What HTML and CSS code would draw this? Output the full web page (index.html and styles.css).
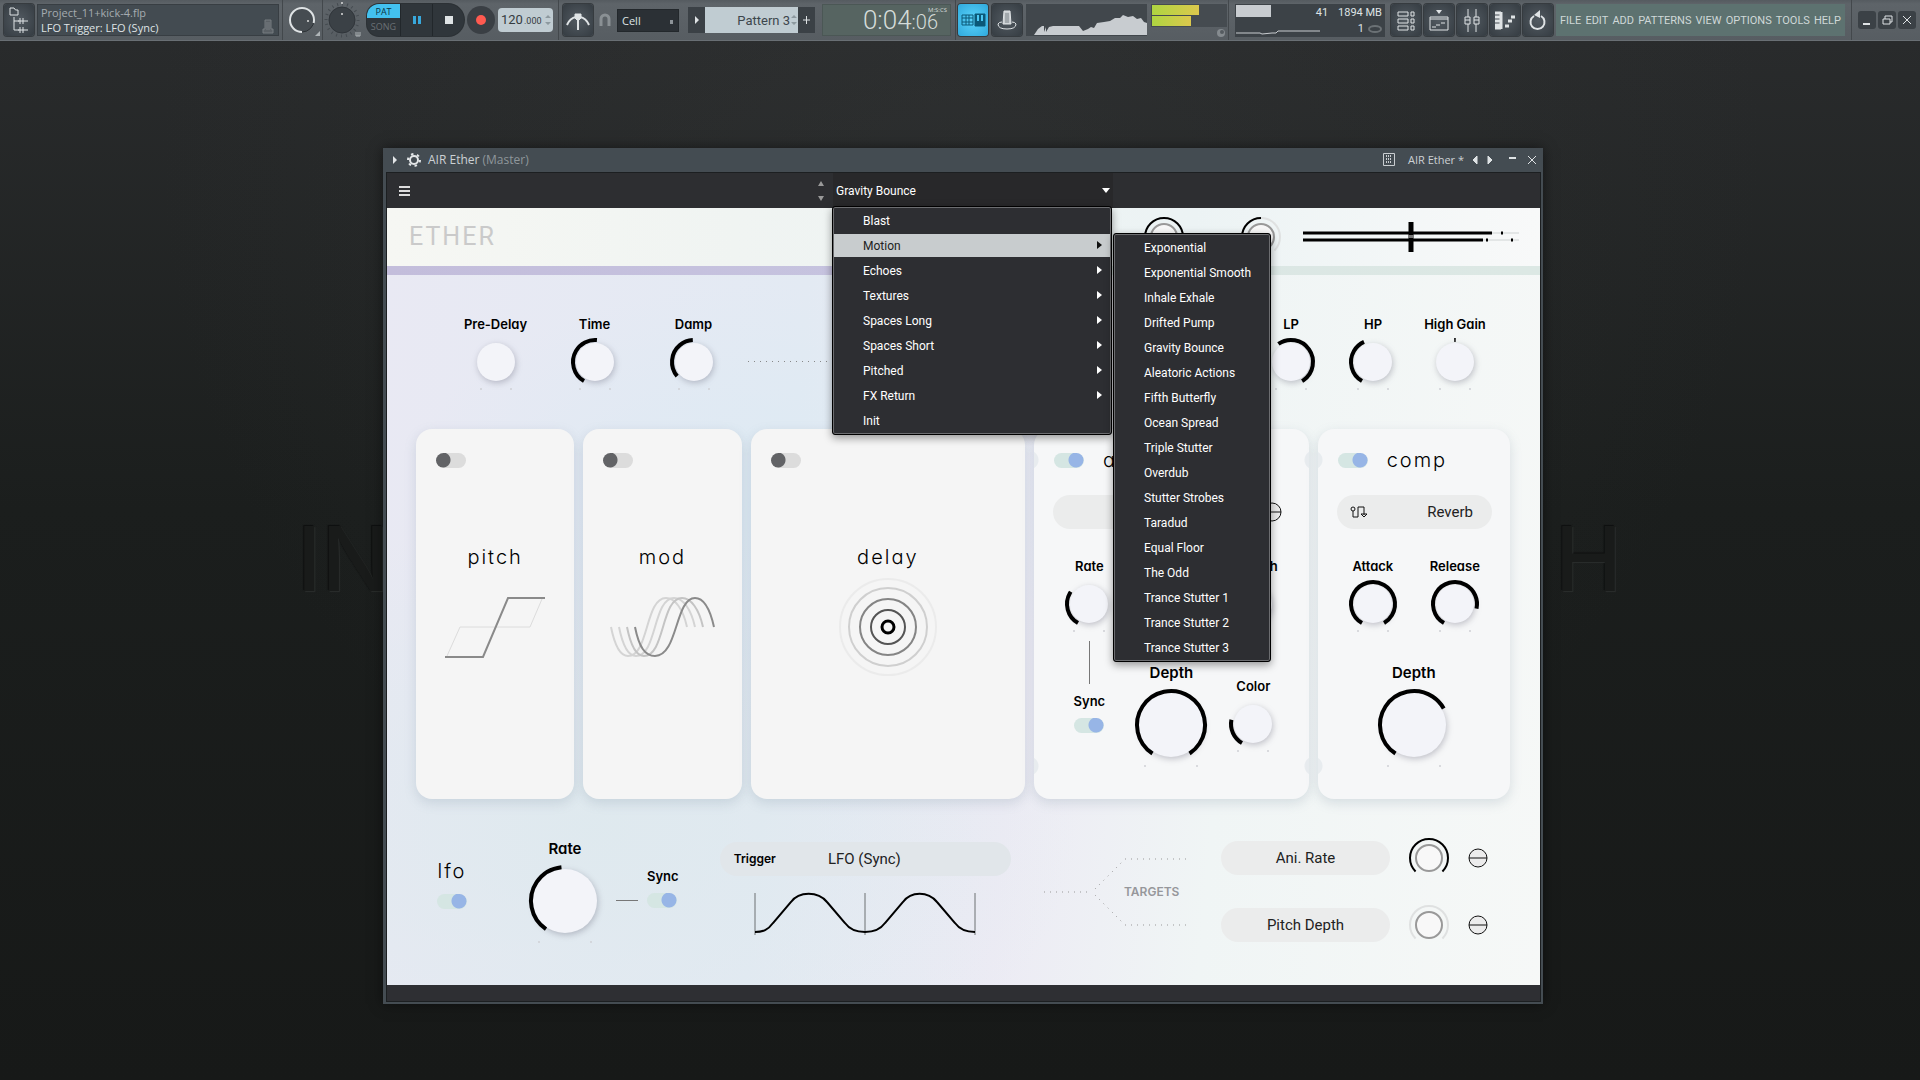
FILE: index.html
```html
<!DOCTYPE html>
<html lang="en">

<head>
  <title>AIR Ether</title>
  <meta charset="utf-8" />
  <meta name="viewport" content="width=device-width, initial-scale=1" />
  <link rel="stylesheet" href="styles.css">
</head>

<body>
  <header class="toolbar">
    <button class="tool" aria-label="Browser">
      <svg viewBox="0 0 30 32" width="30" height="32">
        <path d="M6 4h4l1.500 2H14v5H6z M10 13v13h5 M10 17h5 M16 14v6 M19 14v6 M14 17h10 M16 23v6 M19 23v6 M14 26h10" />
      </svg>
    </button>
    <div class="hint">
      <div>
        <p class="hint-file">Project_11+kick-4.flp</p>
        <p>LFO Trigger: LFO (Sync)</p>
      </div>
      <svg viewBox="0 0 14 16" width="14" height="16"><path d="M4 1h6v9h2v4H2v-4h2z M6 3v8 M8 3v8" stroke="#767c80" fill="#5b6166" /></svg>
    </div>
    <div class="cell">
      <svg viewBox="-19 -19 38 38" width="38" height="38">
        <circle r="12" fill="#464c51" stroke="#2d3236" />
        <circle class="ring" r="12" pathLength="360" stroke-dasharray="285 360" transform="rotate(90)" />
        <circle cx="6" cy="1" r="1" fill="#ddd" />
        <path d="M18 11v5h-5z" fill="#aeb4b7" />
      </svg>
    </div>
    <div class="cell">
      <svg viewBox="-19 -19 38 38" width="38" height="38">
        <circle r="16" fill="none" stroke="#454b50" stroke-dasharray="1 4" stroke-width="3" />
        <circle r="13" fill="#3b4146" stroke="#30353a" />
        <circle cy="-6" r="1" fill="#ddd" />
        <circle cy="-17" r="1" fill="#ddd" />
        <path d="M14 12v4h4v-4M16 12v4" stroke="#aeb4b7" fill="none" />
      </svg>
    </div>
    <div class="transport">
      <div class="mode">
        <button class="mode-on">PAT</button>
        <button>SONG</button>
      </div>
      <button class="play" aria-label="Pause"><i></i><i></i></button>
      <button class="stop" aria-label="Stop"><i></i></button>
    </div>
    <button class="record" aria-label="Record"><i></i></button>
    <label class="tempo"><input type="text" value="120" aria-label="Tempo"><small>.000</small>
      <svg class="spin" viewBox="0 0 6 12" width="6" height="12"><path d="M0 4l3-3 3 3zM0 8l3 3 3-3z" /></svg>
    </label>
    <div class="cell metro">
      <button class="tool" aria-label="Metronome">
        <svg viewBox="0 0 30 32" width="30" height="32">
          <path d="M4 21q3-7 9-8M26 21q-3-7-9-8M15 14v12" stroke-width="2" /><path d="M12 10h6v4l-3 3-3-3z" fill="#dfe3e5" />
        </svg>
      </button>
      <svg viewBox="0 0 14 14" width="14" height="14"><path d="M3 13V6a4 4 0 0 1 8 0v7" fill="none" stroke="#8a9094" stroke-width="3" /></svg>
      <select class="snap" aria-label="Snap"><option>Cell</option></select>
      <div class="pattern">
        <button aria-label="Pattern menu"><svg viewBox="0 0 17 26" width="17" height="26"><path d="M7 9l4 4-4 4z" fill="#dfe3e5" /></svg></button>
        <input type="text" value="Pattern 3" aria-label="Pattern">
        <svg class="spin" viewBox="0 0 6 12" width="6" height="12"><path d="M0 4l3-3 3 3zM0 8l3 3 3-3z" /></svg>
        <button aria-label="Add pattern"><svg viewBox="0 0 17 26" width="17" height="26"><path d="M5 13h7M8.500 9v8" stroke="#dfe3e5" /></svg></button>
      </div>
    </div>
    <div class="clock">
      <span>0:04<small>:06</small></span>
      <sup>M:S:CS</sup>
    </div>
    <div class="cell views">
      <button class="tool tool-on" aria-label="Typing keyboard">
        <svg viewBox="0 0 30 32" width="30" height="32"><path d="M4 11h11v10H4zM4 14h11M4 18h11M8 11v10M11 11v10" stroke="#0b5878" /><path d="M17 10h10v12H17z" fill="#0b5878" stroke="#0b5878" /><path d="M20 11v6M24 11v6" stroke="#4cc8f4" stroke-width="2" /></svg>
      </button>
      <button class="tool" aria-label="Performance">
        <svg viewBox="0 0 30 32" width="30" height="32"><path d="M12 7h6l1 13h-8z" fill="#c9cdd0" /><path d="M6 20q0 5 9 5t9-5q-1-2-4-2M6 20q1-2 4-2" /><path d="M14 9v10M16 9v10" stroke="#7b8287" /></svg>
      </button>
      <svg class="scope" viewBox="0 0 121 32" width="121" height="32">
        <path d="M8 31l4-6 4-3h2v6l2-5v5l3-5 4-1h20l6 0 4 5 5-2 3-2 3 1 3-5 7-1 6-1 5-3 5 0 3-3 5 2 5-1 4 3 4-1 3 4 3 1v12z" fill="#c8ccd0" />
      </svg>
      <div class="peak">
        <div><i class="peak-l"></i><i class="peak-r"></i></div>
        <svg viewBox="0 0 12 8" width="12" height="8"><circle cx="6" cy="4" r="4" fill="#858b8f" /><circle cx="7" cy="3" r="2" fill="#555b60" /></svg>
      </div>
    </div>
    <div class="cell">
      <div class="cpu">
        <div class="cpu-load">
          <i></i>
          <svg viewBox="0 0 84 12" width="84" height="12"><path d="M0 9h24l2 1 10-1h4l2-2h42" fill="none" stroke="#c8ccd0" /></svg>
        </div>
        <span class="cpu-pct">41</span>
        <div class="cpu-mem">
          <span>1894 MB</span>
          <span>1 <svg viewBox="0 0 14 8" width="14" height="8"><ellipse cx="7" cy="4" rx="6" ry="3" fill="none" stroke="#6b7175" stroke-width="2" /></svg></span>
        </div>
      </div>
    </div>
    <nav class="windows">
      <button class="tool" aria-label="Playlist"><svg viewBox="0 0 30 32" width="30" height="32"><path d="M7 8h10v4H7zM20 8h3v4h-3zM7 15h10v4H7zM20 15h3v4h-3zM7 22h10v4H7zM20 22h3v4h-3z" /></svg></button>
      <button class="tool" aria-label="Piano roll"><svg viewBox="0 0 30 32" width="30" height="32"><path d="M6 13h18v13H6zM6 15h18M8 23h4M12 21h4M17 19h4" /><path d="M12 6h6l-3 4z" fill="#dfe3e5" stroke="none" /></svg></button>
      <button class="tool" aria-label="Mixer"><svg viewBox="0 0 30 32" width="30" height="32"><path d="M11 5v8M11 20v8M19 5v8M19 20v8M8 13h5v7H8zM17 13h5v7h-5zM8 16h5M17 16h5" /></svg></button>
      <button class="tool" aria-label="Channel rack"><svg viewBox="0 0 30 32" width="30" height="32"><path d="M5 9h6M5 13h5M5 17h6M5 21h5M5 24h6M11 8v17M15 22h4M18 17h4M21 13h4" stroke-width="3" /></svg></button>
      <button class="tool" aria-label="Undo"><svg viewBox="0 0 30 32" width="30" height="32"><path d="M11 12a7 7 0 1 0 7 0" stroke-width="2" /><path d="M11 11l6-5v8z" fill="#dfe3e5" stroke="none" /></svg></button>
    </nav>
    <nav class="menus">
      <a href="#">FILE</a><a href="#">EDIT</a><a href="#">ADD</a><a href="#">PATTERNS</a><a href="#">VIEW</a><a href="#">OPTIONS</a><a href="#">TOOLS</a><a href="#">HELP</a>
    </nav>
    <div class="cell app-buttons">
      <button aria-label="Minimize"><svg viewBox="0 0 18 18" width="18" height="18"><path d="M5 13h7" stroke-width="2" /></svg></button>
      <button aria-label="Restore"><svg viewBox="0 0 18 18" width="18" height="18"><path d="M5 8h7v5H5zM7 8V5h7v6h-2" /></svg></button>
      <button aria-label="Close"><svg viewBox="0 0 18 18" width="18" height="18"><path d="M5 5l8 8M13 5l-8 8" /></svg></button>
    </div>
  </header>

  <main class="desktop">
    <div class="wallpaper" aria-hidden="true"><span>IN</span><span>H</span></div>

    <section class="window">
      <div class="titlebar">
        <svg viewBox="0 0 30 14" width="30" height="14">
          <path d="M1 3l4 4-4 4z" fill="#e3e6e8" />
          <circle cx="22" cy="7" r="4" fill="none" stroke="#e3e6e8" stroke-width="2" />
          <circle cx="22" cy="7" r="6" fill="none" stroke="#e3e6e8" stroke-width="2" pathLength="60" stroke-dasharray="4 6" />
        </svg>
        <h1>AIR Ether <span>(Master)</span></h1>
        <svg class="titlebar-grid" viewBox="0 0 12 13" width="12" height="13"><path d="M.5.5h11v12H.5z" fill="none" stroke="#c9cdd0" /><path d="M3 3h6M3 6h6M3 9h6" stroke="#c9cdd0" stroke-width="2" stroke-dasharray="1 1" /></svg>
        <span class="titlebar-preset">AIR Ether *</span>
        <button aria-label="Previous"><svg viewBox="0 0 6 10" width="6" height="10"><path d="M5 1v8L1 5z" fill="#dfe3e5" /></svg></button>
        <button aria-label="Next"><svg viewBox="0 0 6 10" width="6" height="10"><path d="M1 1v8l4-4z" fill="#dfe3e5" /></svg></button>
        <button class="titlebar-min" aria-label="Minimize"><svg viewBox="0 0 8 10" width="8" height="10"><path d="M0 3h7" stroke-width="2" /></svg></button>
        <button aria-label="Close"><svg viewBox="0 0 10 10" width="10" height="10"><path d="M1 1l8 8M9 1l-8 8" /></svg></button>
      </div>

      <div class="plugin">
        <div class="presetbar">
          <button class="burger" aria-label="Menu"><i></i><i></i><i></i></button>
          <div class="stepper">
            <button aria-label="Up"><svg viewBox="0 0 6 5" width="6" height="5"><path d="M0 5l3-5 3 5z" /></svg></button>
            <button aria-label="Down"><svg viewBox="0 0 6 5" width="6" height="5"><path d="M0 0l3 5 3-5z" /></svg></button>
          </div>
          <div class="preset">
            <button class="preset-name" aria-haspopup="menu">Gravity Bounce <i></i></button>
            <ul class="menu">
              <li><button>Blast</button></li>
              <li class="has-sub open"><button>Motion</button>
                <ul class="menu submenu">
                  <li><button>Exponential</button></li>
                  <li><button>Exponential Smooth</button></li>
                  <li><button>Inhale Exhale</button></li>
                  <li><button>Drifted Pump</button></li>
                  <li><button>Gravity Bounce</button></li>
                  <li><button>Aleatoric Actions</button></li>
                  <li><button>Fifth Butterfly</button></li>
                  <li><button>Ocean Spread</button></li>
                  <li><button>Triple Stutter</button></li>
                  <li><button>Overdub</button></li>
                  <li><button>Stutter Strobes</button></li>
                  <li><button>Taradud</button></li>
                  <li><button>Equal Floor</button></li>
                  <li><button>The Odd</button></li>
                  <li><button>Trance Stutter 1</button></li>
                  <li><button>Trance Stutter 2</button></li>
                  <li><button>Trance Stutter 3</button></li>
                </ul>
              </li>
              <li class="has-sub"><button>Echoes</button></li>
              <li class="has-sub"><button>Textures</button></li>
              <li class="has-sub"><button>Spaces Long</button></li>
              <li class="has-sub"><button>Spaces Short</button></li>
              <li class="has-sub"><button>Pitched</button></li>
              <li class="has-sub"><button>FX Return</button></li>
              <li><button>Init</button></li>
            </ul>
          </div>
        </div>

        <div class="ether">
          <div class="brand">
            <h2>ETHER</h2>
            <svg class="brand-ring" viewBox="-22 -22 44 44" width="44" height="44">
              <circle r="13" class="ring-inner" /><circle r="19" class="ring-arc" pathLength="360" stroke-dasharray="270 360" transform="rotate(135)" />
            </svg>
            <svg class="brand-ring" viewBox="-22 -22 44 44" width="44" height="44">
              <circle r="13" class="ring-inner" /><circle r="19" class="ring-track" pathLength="360" stroke-dasharray="270 360" transform="rotate(135)" /><circle r="19" class="ring-arc" pathLength="360" stroke-dasharray="135 360" transform="rotate(135)" />
            </svg>
            <svg class="balance" viewBox="0 0 216 30" width="216" height="30">
              <path d="M189 11h27M180 18h36" stroke="#e3e6e6" stroke-width="2" />
              <path d="M0 11h189M0 18h180M198 11h2M183 18h2M208 18h2" stroke="#000" stroke-width="3" />
              <path d="M108 0v30" stroke="#000" stroke-width="5" />
              <path d="M106 13h4v3h-4z" fill="#777" />
            </svg>
          </div>

          <div class="main-controls">
            <div class="knobs knobs-wide">
              <label class="control">Pre-Delay<span class="knob"></span></label>
              <label class="control">Time<span class="knob" data-from="0" data-to="155"></span></label>
              <label class="control">Damp<span class="knob" data-from="20" data-to="147"></span></label>
            </div>
            <div class="dots"></div>
            <div class="knobs">
              <label class="control">LP<span class="knob" data-from="115" data-to="300"></span></label>
              <label class="control">HP<span class="knob" data-from="0" data-to="126"></span></label>
              <label class="control">High Gain<span class="knob" data-from="148" data-to="152"></span></label>
            </div>
          </div>

          <div class="cards">
            <article class="card">
              <header><input type="checkbox" class="toggle" aria-label="pitch on"></header>
              <h3>pitch</h3>
              <svg viewBox="0 0 110 100" width="110" height="100" fill="none">
                <path d="M7 79L20 50H90L102 22" stroke="#dcdcdc" />
                <path d="M5 80H43L68 21H105" stroke="#8a8a8a" stroke-width="2" />
              </svg>
            </article>
            <article class="card">
              <header><input type="checkbox" class="toggle" aria-label="mod on"></header>
              <h3>mod</h3>
              <svg viewBox="0 0 110 100" width="110" height="100" fill="none" stroke-width="2">
                <g stroke="#d4d4d4"><path d="M4 50C8 70 14 79 21 79C42 79 38 21 59 21C68 21 76 32 80 50" /><path d="M12 50C16 70 22 79 29 79C50 79 46 21 67 21C76 21 84 32 88 50" /><path d="M20 50C24 70 30 79 37 79C58 79 54 21 75 21C84 21 92 32 96 50" stroke="#c4c4c4" /></g>
                <path d="M28 50C32 70 38 79 48 79C71 79 68 21 88 21C97 21 103 32 107 50" stroke="#8a8a8a" />
              </svg>
            </article>
            <article class="card">
              <header><input type="checkbox" class="toggle" aria-label="delay on"></header>
              <h3>delay</h3>
              <svg viewBox="-50 -50 100 100" width="100" height="100" fill="none" stroke-width="2">
                <circle r="48" stroke="#ebebeb" /><circle r="39" stroke="#cfcfcf" /><circle r="28" stroke="#858585" /><circle r="17" stroke="#555" /><circle r="6" stroke="#000" stroke-width="3" />
              </svg>
            </article>
            <article class="card notch notch-both">
              <header><input type="checkbox" class="toggle" aria-label="animate on" checked><h3>animate</h3></header>
              <div class="source">
                <select class="pill" aria-label="Animate source"><option> </option></select>
                <svg class="minus" viewBox="-10 -10 20 20" width="20" height="20"><circle r="9" /><path d="M-9 0H9" /></svg>
              </div>
              <div class="knob-grid">
                <label class="control">Rate<span class="knob" data-from="0" data-to="94"></span></label>
                <span></span>
                <label class="control">Smooth<span class="knob"></span></label>
                <div class="sync">
                  <i class="vline"></i>
                  <label>Sync<input type="checkbox" class="toggle" checked></label>
                </div>
                <label class="control control-big">Depth<span class="knob" data-size="big" data-from="3" data-to="297"></span></label>
                <label class="control control-low">Color<span class="knob" data-from="0" data-to="71"></span></label>
              </div>
            </article>
            <article class="card notch">
              <header><input type="checkbox" class="toggle" aria-label="comp on" checked><h3>comp</h3></header>
              <div class="source">
                <svg class="route" viewBox="0 0 18 14" width="18" height="14"><circle cx="3" cy="4" r="2" /><path d="M3 6v6h5V2h6v8M11 9h6l-3 3z" /></svg>
                <select class="pill pill-right" aria-label="Compressor routing"><option>Reverb</option></select>
              </div>
              <div class="knob-grid knob-grid-two">
                <label class="control">Attack<span class="knob" data-from="0" data-to="300"></span></label>
                <label class="control">Release<span class="knob" data-from="0" data-to="252"></span></label>
                <label class="control control-big control-span">Depth<span class="knob" data-size="big" data-from="3" data-to="211"></span></label>
              </div>
            </article>
          </div>

          <div class="lfo">
            <div class="lfo-name"><h3>lfo</h3><input type="checkbox" class="toggle" aria-label="lfo on" checked></div>
            <label class="control control-lfo">Rate<span class="knob" data-size="big" data-from="4" data-to="144"></span></label>
            <i class="hline"></i>
            <label class="lfo-sync">Sync<input type="checkbox" class="toggle" checked></label>
            <div class="trigger">
              <div class="pill pill-trigger">
                <label for="trigger">Trigger</label>
                <select id="trigger"><option>LFO (Sync)</option></select>
              </div>
              <svg viewBox="0 0 222 44" width="222" height="44" fill="none">
                <path d="M1 1v42M111 1v42M221 1v42" stroke="#6d7072" />
                <path d="M1 40C9 40 14 38 19 31L37 10C45-1 64-1 73 10L91 31C96 38 103 40 111 40S126 38 131 31L149 10C157-1 174-1 183 10L201 31C206 38 213 40 221 40" stroke="#000" stroke-width="2" />
              </svg>
            </div>
            <svg class="branch" viewBox="0 0 146 72" width="146" height="72">
              <path d="M1 36H47M52 33L80 5M52 39L80 67M82 3H146M82 69H146" />
              <text x="81" y="40">TARGETS</text>
            </svg>
            <div class="targets">
              <select class="pill" aria-label="Target 1"><option>Ani. Rate</option></select>
              <svg viewBox="-21 -21 42 42" width="42" height="42"><circle r="13" class="ring-inner" /><circle r="19" class="ring-arc" pathLength="360" stroke-dasharray="270 360" transform="rotate(135)" /></svg>
              <svg class="minus" viewBox="-10 -10 20 20" width="20" height="20"><circle r="9" /><path d="M-9 0H9" /></svg>
              <select class="pill" aria-label="Target 2"><option>Pitch Depth</option></select>
              <svg viewBox="-21 -21 42 42" width="42" height="42"><circle r="13" class="ring-inner" /><circle r="19" class="ring-track" pathLength="360" stroke-dasharray="270 360" transform="rotate(135)" /></svg>
              <svg class="minus" viewBox="-10 -10 20 20" width="20" height="20"><circle r="9" /><path d="M-9 0H9" /></svg>
            </div>
          </div>
        </div>
        <footer class="plugin-foot"></footer>
      </div>
    </section>
  </main>

  <script src="knobs.js"></script>
</body>

</html>
```
FILE: knobs.js
```js
/**
 * Draw every knob. data-from and data-to are degrees along the 300 degree
 * sweep that starts at the lower left.
 */
document.querySelectorAll('.knob').forEach(knob => {
  const big = knob.dataset.size === 'big';
  const box = big ? 84 : 56;
  const cap = big ? 32 : 19;
  const radius = big ? 34 : 22;
  const tick = big ? [26, 41] : [15, 27];
  const from = Number(knob.dataset.from || 0);
  const to = Number(knob.dataset.to || 0);

  const arc = to > from
    ? `<circle class="knob-arc" r="${radius}" pathLength="360"
        stroke-dasharray="${to - from} 360" transform="rotate(${120 + from})"/>`
    : '';

  knob.innerHTML = `
    <svg viewBox="${-box / 2} ${-box / 2} ${box} ${box}" width="${box}" height="${box}">
      <circle class="knob-cap" r="${cap}"/>
      ${arc}
      <circle class="knob-tick" cx="${-tick[0]}" cy="${tick[1]}" r="1"/>
      <circle class="knob-tick" cx="${tick[0]}" cy="${tick[1]}" r="1"/>
    </svg>
    <input type="range" min="0" max="300" value="${to}">`;
});
```
FILE: styles.css
```css
* {
  box-sizing: border-box;
}

body {
  margin: 0;
  min-height: 100vh;
  display: flex;
  flex-direction: column;
  overflow: hidden;
  background: #1a1c1c;
  color: #000;
  font-family: Inter, "Liberation Sans", sans-serif;
  font-size: 13px;
}

h1,
h2,
h3,
p,
ul {
  margin: 0;
  padding: 0;
}

button,
input,
select {
  margin: 0;
  padding: 0;
  border: 0;
  background: none;
  color: inherit;
  font: inherit;
  appearance: none;
}

svg {
  display: block;
  flex: none;
  overflow: visible;
}

/* Toolbar */

.toolbar {
  display: flex;
  align-items: center;
  gap: 3px;
  height: 41px;
  padding: 0 4px;
  background: linear-gradient(#555b60, #5e6469 10%, #575d62);
  border-bottom: 1px solid #696f74;
  color: #dfe3e5;
  font-family: Roboto, sans-serif;
  position: relative;
}

.cell {
  display: flex;
  align-items: center;
  align-self: stretch;
  border-left: 1px solid #43484c;
}

.toolbar > .cell + .cell {
  margin-left: -2px;
}

.tool {
  width: 30px;
  height: 32px;
  flex: none;
  border-radius: 3px;
  background: radial-gradient(#525a61, #353c42);
  box-shadow: 0 0 0 1px #363b3f;
}

.tool svg,
.app-buttons svg {
  fill: none;
  stroke: #dfe3e5;
}

.tool-on {
  background: radial-gradient(#5cd3fb, #2fa9dc);
}

.hint {
  display: flex;
  align-items: center;
  justify-content: space-between;
  flex: 1;
  height: 32px;
  padding: 0 3px;
  background: #434b51;
  border: 1px solid #383e43;
  font-family: "Open Sans", sans-serif;
  font-size: 11px;
  line-height: 15px;
}

.hint-file {
  color: #a5abb0;
}

.hint svg {
  align-self: flex-end;
}

.ring {
  fill: none;
  stroke: #dfe3e5;
  stroke-width: 2;
}

.transport {
  display: flex;
  height: 32px;
  margin-left: 3px;
  overflow: hidden;
  border-radius: 12px 16px 16px 12px;
  background: #30363b;
  box-shadow: 0 0 0 1px #2c3135;
}

.mode {
  display: flex;
  flex-direction: column;
  width: 33px;
  font-family: "Open Sans", sans-serif;
  font-size: 9px;
}

.mode button {
  height: 16px;
  color: #6b7175;
}

.mode .mode-on {
  height: 14px;
  background: #43c1ef;
  color: #0b3444;
}

.play,
.stop {
  display: flex;
  align-items: center;
  justify-content: center;
  gap: 2px;
  width: 32px;
  border-left: 1px solid #22272b;
}

.play i {
  width: 3px;
  height: 8px;
  background: #38a8dc;
}

.stop i {
  width: 8px;
  height: 8px;
  background: #dfe3e5;
}

.record {
  display: flex;
  align-items: center;
  justify-content: center;
  width: 28px;
  height: 28px;
  border-radius: 14px;
  background: #3a3f44;
}

.record i {
  width: 10px;
  height: 10px;
  border-radius: 5px;
  background: #ff5a50;
}

.tempo {
  display: flex;
  align-items: baseline;
  width: 55px;
  height: 24px;
  padding: 0 2px 0 3px;
  border-radius: 4px;
  background: #c0ccd2;
  color: #343b40;
  font-size: 13px;
  line-height: 24px;
}

.tempo input {
  width: 23px;
}

.tempo small {
  flex: 1;
  font-size: 9px;
}

.spin {
  align-self: center;
  fill: #8d999f;
}

.metro {
  gap: 5px;
  margin-left: 2px;
  padding-left: 4px;
}

.snap {
  width: 62px;
  height: 23px;
  padding: 0 4px;
  background: #2b3035 linear-gradient(90deg, #8d9398, #8d9398) 52px 10px / 3px 4px no-repeat;
  border: 1px solid #23282c;
  font-family: "Open Sans", sans-serif;
  font-size: 11px;
}

.pattern {
  display: flex;
  align-items: center;
  height: 26px;
  margin-left: 4px;
  background: #c0ccd2;
  color: #3d464c;
  font-size: 13px;
}

.pattern input {
  width: 85px;
  text-align: right;
}

.pattern .spin {
  margin: 0 1px;
}

.pattern button {
  width: 17px;
  height: 26px;
  background: #3b4146;
}

.clock {
  display: flex;
  justify-content: flex-end;
  width: 129px;
  height: 32px;
  margin: 0 1px 0 4px;
  padding-right: 3px;
  background: #566461;
  border: 1px solid #4b5755;
  color: #d5dcda;
  font-size: 26px;
  font-weight: 300;
  line-height: 31px;
  position: relative;
}

.clock span {
  margin-right: 9px;
}

.clock small {
  font-size: 20px;
}

.clock sup {
  font-family: "Open Sans", sans-serif;
  font-size: 6px;
  font-weight: 400;
  line-height: 8px;
  position: absolute;
  top: 1px;
  right: 3px;
}

.views {
  gap: 4px;
  padding-left: 2px;
}

.scope {
  background: #41474c;
}

.peak {
  display: flex;
  flex-direction: column;
  align-items: flex-end;
  align-self: flex-start;
  gap: 2px;
  margin-top: 4px;
}

.peak div {
  display: flex;
  flex-direction: column;
  gap: 1px;
  width: 76px;
  height: 23px;
  padding: 1px;
  background: #454b50;
}

.peak i {
  height: 10px;
  background: linear-gradient(90deg, #aed541, #dcc84d);
}

.peak-l {
  width: 47px;
}

.peak-r {
  width: 39px;
}

.cpu {
  display: flex;
  justify-content: space-between;
  width: 150px;
  height: 33px;
  margin-left: 6px;
  padding: 1px 3px 1px 1px;
  background: #3c4247;
  font-size: 11px;
  line-height: 16px;
}

.cpu-load {
  width: 70px;
}

.cpu-load i {
  display: block;
  width: 35px;
  height: 12px;
  margin-bottom: 7px;
  background: #c8ccd0;
}

.cpu-mem {
  display: flex;
  flex-direction: column;
  align-items: flex-end;
}

.cpu-mem span {
  display: flex;
  align-items: center;
  gap: 4px;
}

.windows {
  display: flex;
  gap: 3px;
  margin-left: 3px;
}

.menus {
  display: flex;
  align-items: center;
  justify-content: space-between;
  width: 289px;
  height: 32px;
  padding: 0 4px;
  background: #5d7270;
  font-size: 11px;
}

.menus a {
  color: #cfd8d8;
  text-decoration: none;
}

.app-buttons {
  gap: 2px;
  margin-left: 3px;
  padding-left: 6px;
}

.app-buttons button {
  width: 18px;
  height: 18px;
  border-radius: 3px;
  background: #3b4146;
}

/* Desktop */

.desktop {
  flex: 1;
  position: relative;
  background:
    radial-gradient(circle at 50% 10%, rgba(60, 62, 62, 0.25), transparent 60%),
    linear-gradient(#292b2c, #1b1e1d 45%, #171918);
}

.wallpaper {
  display: flex;
  justify-content: space-between;
  color: #191b1a;
  font-size: 90px;
  font-weight: 500;
  line-height: 110px;
  text-shadow: 1px 1px 1px #2b2e2d, -1px -1px 1px #0e0f0f;
  position: absolute;
  top: 463px;
  left: 297px;
  right: 298px;
}

.window {
  position: absolute;
  top: 107px;
  left: 383px;
  right: 377px;
  padding: 0 3px 3px 4px;
  background: #444c52;
  box-shadow: 0 0 12px rgba(0, 0, 0, 0.5);
}

.titlebar {
  display: flex;
  align-items: center;
  height: 25px;
  padding: 0 1px 2px 5px;
  color: #ccd1d4;
  font-family: "Open Sans", sans-serif;
  font-size: 11px;
}

.titlebar h1 {
  flex: 1;
  margin-left: 6px;
  font-size: 12px;
  font-weight: 400;
}

.titlebar h1 span {
  color: #8f979b;
}

.titlebar-preset {
  margin: 0 3px 0 13px;
}

.titlebar button {
  width: 15px;
}

.titlebar button svg {
  margin: auto;
  stroke: #dfe3e5;
}

.titlebar .titlebar-min {
  margin-left: 8px;
  margin-right: 4px;
}

.plugin {
  outline: 1px solid #1c1f21;
}

.presetbar {
  display: flex;
  align-items: center;
  height: 35px;
  padding-left: 12px;
  background: #2d2e31;
  color: #fff;
  font-family: Roboto, sans-serif;
  font-size: 12px;
}

.burger {
  display: flex;
  flex-direction: column;
  gap: 2px;
  width: 11px;
}

.burger i {
  height: 2px;
  background: #ddd;
}

.stepper {
  display: flex;
  flex-direction: column;
  gap: 10px;
  margin-left: 408px;
  fill: #999;
}

.preset {
  width: 280px;
  margin-left: 9px;
  position: relative;
}

.preset-name {
  display: flex;
  align-items: center;
  justify-content: space-between;
  width: 100%;
  height: 35px;
  padding: 0 3px;
  background: #28282a;
}

.preset-name i {
  border: 4px solid transparent;
  border-top: 5px solid #fff;
  border-bottom: 0;
}

.menu {
  list-style: none;
  width: 280px;
  padding: 2px 1px 0;
  background: #2d2e32;
  border: 1px solid #000;
  border-radius: 3px;
  box-shadow: inset 0 0 0 1px #6c6d70, 0 3px 8px rgba(0, 0, 0, 0.4);
  position: absolute;
  top: 33px;
  left: -1px;
  z-index: 2;
}

.menu li {
  position: relative;
}

.menu button {
  display: block;
  width: 100%;
  height: 23px;
  margin-bottom: 2px;
  padding-left: 29px;
  color: #fff;
  text-align: left;
}

.menu .open > button {
  background: #c8ccce;
  color: #222;
}

.has-sub::after {
  content: "";
  border: 4px solid transparent;
  border-left: 5px solid #fff;
  border-right: 0;
  position: absolute;
  right: 8px;
  top: 7px;
}

.open::after {
  border-left-color: #111;
}

.submenu {
  width: 158px;
  top: -1px;
  left: 279px;
}

/* Plugin face */

.ether {
  background:
    radial-gradient(ellipse at 32% 38%, rgba(218, 234, 243, 0.7), transparent 32%),
    radial-gradient(ellipse at 18% 80%, rgba(222, 233, 238, 0.9), transparent 36%),
    linear-gradient(95deg, #e9e9f3, #e3eaf3 35%, #ecebf4 55%, #f0f5f5 72%, #f6f8f7);
  font-weight: 600;
  line-height: 20px;
  font-feature-settings: "cv11";
}

.brand {
  display: flex;
  align-items: center;
  height: 67px;
  padding: 0 21px 0 22px;
  background: linear-gradient(90deg, #f6f7f3, #f0f4f2 30%, #ecf3f4 70%, #f8f9f9);
  border-bottom: 9px solid;
  border-image: linear-gradient(90deg, #c3bddb, #c6c3df 40%, #dbe6e4 60%, #dce8e4) 1;
}

.brand h2 {
  flex: 1;
  color: #cacaca;
  font-family: Roboto, sans-serif;
  font-size: 25px;
  font-weight: 400;
  letter-spacing: 2px;
}

.brand-ring {
  margin-right: 53px;
}

.brand-ring + .balance {
  margin-left: -33px;
}

.ring-inner {
  fill: #f8f8f8;
  stroke: #999;
  stroke-width: 2;
}

.ring-arc,
.ring-track {
  fill: none;
  stroke: #000;
  stroke-width: 2;
}

.ring-track {
  stroke: #dfe1e1;
}

.main-controls {
  display: flex;
  padding: 39px 44px 39px 59px;
}

.knobs {
  display: flex;
}

.control {
  display: flex;
  flex-direction: column;
  align-items: center;
  width: 82px;
}

.knobs-wide .control {
  width: 99px;
}

.knob {
  display: block;
  position: relative;
}

.knob input {
  width: 100%;
  height: 100%;
  opacity: 0;
  position: absolute;
  top: 0;
  left: 0;
}

.knob-cap {
  fill: #f3f4f9;
  filter: drop-shadow(1px 2px 3px rgba(90, 90, 110, 0.35));
}

.knob-arc {
  fill: none;
  stroke: #000;
  stroke-width: 4;
}

.knob-tick {
  fill: #cfd1d6;
}

.dots {
  flex: 1;
  height: 1px;
  margin: 47px 5px 0;
  background: repeating-linear-gradient(90deg, #888 0 1px, transparent 1px 6px);
}

.cards {
  display: grid;
  grid-template-columns: 158fr 158fr 274fr 274fr 192fr;
  gap: 9px;
  padding: 0 30px 0 29px;
}

.card {
  min-height: 370px;
  padding: 17px 14px;
  border-radius: 16px;
  background: #f5f5f5;
  box-shadow: 0 4px 12px rgba(110, 130, 150, 0.22);
}

.card header {
  display: flex;
  align-items: center;
  gap: 19px;
  height: 28px;
  padding-left: 6px;
}

h3 {
  font-size: 20px;
  font-weight: 300;
  letter-spacing: 2px;
  line-height: 28px;
}

.card > h3 {
  margin: 69px 0 6px;
  text-align: center;
}

.card > svg {
  margin: 0 auto;
}

.notch {
  background:
    radial-gradient(circle at -5px 31px, #e8ecef 9px, transparent 10px),
    radial-gradient(circle at -5px 337px, #e8ecef 9px, transparent 10px),
    #f6f7f8;
}

.notch-both {
  background:
    radial-gradient(circle at -5px 31px, #e8ecef 9px, transparent 10px),
    radial-gradient(circle at -5px 337px, #e8ecef 9px, transparent 10px),
    radial-gradient(circle at calc(100% + 5px) 31px, #e8ecef 9px, transparent 10px),
    radial-gradient(circle at calc(100% + 5px) 337px, #e8ecef 9px, transparent 10px),
    #f6f7f8;
}

.toggle {
  display: block;
  width: 30px;
  height: 15px;
  border-radius: 8px;
  background: radial-gradient(circle at 7px 7px, #626366 7px, transparent 8px), #dcdcdc;
}

.toggle:checked {
  background: radial-gradient(circle at 22px 7px, #97b5e6 7px, transparent 8px), #d5e6e3;
}

.source {
  display: flex;
  align-items: center;
  gap: 12px;
  margin: 21px 13px 0 5px;
  position: relative;
}

.notch:not(.notch-both) .source {
  margin-right: 4px;
}

.pill {
  width: 100%;
  height: 34px;
  border-radius: 17px;
  background: #ebecec;
  color: #222;
  font-family: Roboto, sans-serif;
  font-size: 15px;
  font-weight: 400;
  text-align: center;
  text-align-last: center;
}

.pill-right {
  padding-right: 19px;
  text-align-last: right;
}

.route {
  fill: none;
  stroke: #111;
  position: absolute;
  left: 13px;
}

.minus {
  fill: #ececec;
  stroke: #111;
}

.knob-grid {
  display: grid;
  grid-template-columns: repeat(3, 82px);
  justify-content: center;
  align-items: start;
  row-gap: 9px;
  margin-top: 27px;
}

.knob-grid-two {
  grid-template-columns: repeat(2, 82px);
}

.control-big,
.control-lfo {
  font-size: 15px;
}

.control-big {
  margin-top: 22px;
}

.control-low {
  margin-top: 35px;
}

.control-span {
  grid-column: span 2;
  justify-self: center;
}

.sync {
  display: flex;
  flex-direction: column;
  align-items: center;
  gap: 7px;
}

.sync .toggle,
.lfo-sync .toggle {
  margin-top: 7px;
}

.vline {
  width: 1px;
  height: 43px;
  background: #777;
}

.lfo {
  display: flex;
  align-items: flex-start;
  height: 186px;
  padding: 40px 52px 0 36px;
}

.lfo-name {
  display: flex;
  flex-direction: column;
  align-items: center;
  gap: 9px;
  width: 58px;
  margin-top: 18px;
}

.control-lfo {
  width: 84px;
  margin-left: 42px;
}

.hline {
  width: 22px;
  height: 1px;
  margin: 61px 9px 0;
  background: #777;
}

.lfo-sync {
  margin-top: 27px;
}

.trigger {
  flex: 1;
  margin: 3px 32px 0 41px;
}

.pill-trigger {
  display: flex;
  align-items: center;
  padding: 0 14px;
  background: #e1e6ea;
}

.pill-trigger label {
  color: #000;
  font-family: Inter, "Liberation Sans", sans-serif;
  font-size: 12px;
  font-weight: 600;
}

.pill-trigger select {
  flex: 1;
  padding-right: 44px;
  text-align-last: center;
}

.trigger svg {
  margin: 16px auto 0;
}

.branch {
  margin-top: 17px;
}

.branch path {
  fill: none;
  stroke: #999;
  stroke-dasharray: 1 5;
}

.branch text {
  fill: #96979b;
  font-size: 12px;
}

.targets {
  display: grid;
  grid-template-columns: 169px 42px 20px;
  gap: 25px 18px;
  align-items: center;
  margin-left: 32px;
  margin-top: -2px;
}

.plugin-foot {
  height: 16px;
  background: #2e2f33;
}
```
